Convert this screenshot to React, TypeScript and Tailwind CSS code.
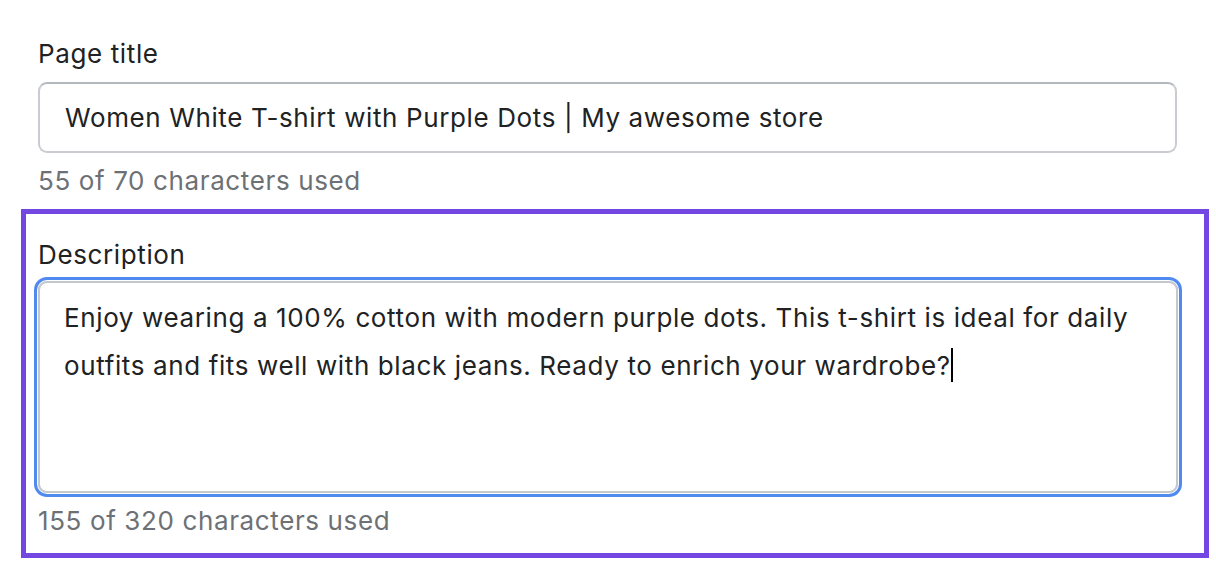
import React from "react";

export default function App() {
  const font = { fontFamily: "Inter, 'Noto Sans', sans-serif" };
  return (
    <div className="w-[1216px] h-[572px] bg-white text-[#202223] overflow-hidden" style={font}>
      <div className="pt-[38px] pl-[21px] w-[1209px]">
        <div className="pl-[17px] pr-[32px] text-[26px] tracking-[0.62px]">
          <div className="leading-[32px] h-[32px]">Page title</div>
          <div className="mt-[12px] h-[71px] border-2 border-[#c9ccd0] border-t-[#b3b8bd] rounded-[9px] flex items-center pl-[25px]">
            Women White T-shirt with Purple Dots | My awesome store
          </div>
          <div className="mt-[12px] leading-[32px] text-[#6d7175]">55 of 70 characters used</div>
        </div>
        <div className="mt-[12px] border-[5px] border-[#7447e3] h-[349px] pl-[12px] pr-[26px] pt-[25px] text-[26px] tracking-[0.62px]">
          <div className="leading-[32px] h-[32px]">Description</div>
          <div className="mt-[10px] h-[212px] rounded-[9px] border-2 border-[#c4c7cb] shadow-[0_0_0_1px_#ffffff,0_0_0_4px_#5089f0] pl-[24px] pr-[20px] pt-[11px] leading-[48px]">
            Enjoy wearing a 100% cotton with modern purple dots. This t-shirt is ideal for daily outfits and fits well with black jeans. Ready to enrich your wardrobe?<span className="inline-block w-[2px] h-[34px] bg-black align-[-7px]"></span>
          </div>
          <div className="mt-[12px] leading-[32px] text-[#6d7175]">155 of 320 characters used</div>
        </div>
      </div>
    </div>
  );
}
